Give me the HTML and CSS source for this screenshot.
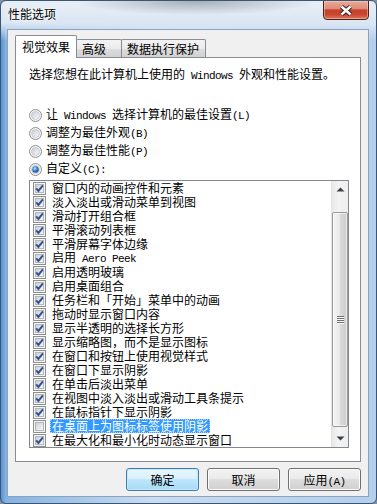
FILE: index.html
```html
<!DOCTYPE html>
<html lang="zh-CN">
  <head>
    <meta charset="UTF-8" />
    <meta name="viewport" content="width=device-width, initial-scale=1.0" />
    <title>性能选项</title>
    <link rel="stylesheet" href="styles.css">
  </head>
  <body>
    <svg class="defs" width="0" height="0">
      <defs>
        <linearGradient id="boxFill" x1="0" y1="0" x2="1" y2="1">
          <stop offset="0" stop-color="#c9cdd3" />
          <stop offset="1" stop-color="#f8f9fa" />
        </linearGradient>
        <radialGradient id="dotFill" cx="0.4" cy="0.35" r="0.75">
          <stop offset="0" stop-color="#c4e6fe" />
          <stop offset="0.45" stop-color="#3c86d2" />
          <stop offset="1" stop-color="#163b78" />
        </radialGradient>
        <symbol id="chk-off" viewBox="0 0 13 13">
          <rect x="0.5" y="0.5" width="12" height="12" fill="#f4f4f4" stroke="#8e8f8f" />
          <rect x="2.5" y="2.5" width="8" height="8" fill="url(#boxFill)" stroke="#b3b7bc" />
        </symbol>
        <symbol id="chk-on" viewBox="0 0 13 13">
          <use href="#chk-off" />
          <path d="M3.2 6.3 L5.4 8.9 L9.9 3.3" fill="none" stroke="#34508c" stroke-width="1.9" />
        </symbol>
        <symbol id="rad-off" viewBox="0 0 13 13">
          <circle cx="6.5" cy="6.5" r="6" fill="#f4f4f4" stroke="#8f8f8f" />
          <circle cx="6.5" cy="6.5" r="4" fill="url(#boxFill)" stroke="#c2c5c9" stroke-width="0.8" />
        </symbol>
        <symbol id="rad-on" viewBox="0 0 13 13">
          <use href="#rad-off" />
          <circle cx="6.5" cy="6.5" r="3.2" fill="url(#dotFill)" />
        </symbol>
      </defs>
    </svg>

    <div class="window">
      <div class="titlebar">
        <span class="title">性能选项</span>
        <div class="close">
          <svg width="14" height="11" viewBox="0 0 14 11">
            <path d="M2.5 1.5 L11.5 9.5 M11.5 1.5 L2.5 9.5" stroke="#3b1912" stroke-width="4.4" />
            <path d="M2.5 1.5 L11.5 9.5 M11.5 1.5 L2.5 9.5" stroke="#fff" stroke-width="2.4" />
          </svg>
        </div>
      </div>

      <div class="client">
        <div class="tabs">
          <div class="tab active">视觉效果</div>
          <div class="tab tab-adv">高级</div>
          <div class="tab tab-dep">数据执行保护</div>
        </div>

        <div class="panel">
          <p class="intro">选择您想在此计算机上使用的<span class="en"> Windows </span>外观和性能设置。</p>

          <div class="radios">
            <div class="radio"><svg class="rb"><use href="#rad-off" /></svg><span>让<span class="en"> Windows </span>选择计算机的最佳设置<span class="en">(L)</span></span></div>
            <div class="radio"><svg class="rb"><use href="#rad-off" /></svg><span>调整为最佳外观<span class="en">(B)</span></span></div>
            <div class="radio"><svg class="rb"><use href="#rad-off" /></svg><span>调整为最佳性能<span class="en">(P)</span></span></div>
            <div class="radio"><svg class="rb"><use href="#rad-on" /></svg><span>自定义<span class="en">(C):</span></span></div>
          </div>

          <div class="listbox">
            <ul class="items">
              <li><svg class="cb"><use href="#chk-on" /></svg><span>窗口内的动画控件和元素</span></li>
              <li><svg class="cb"><use href="#chk-on" /></svg><span>淡入淡出或滑动菜单到视图</span></li>
              <li><svg class="cb"><use href="#chk-on" /></svg><span>滑动打开组合框</span></li>
              <li><svg class="cb"><use href="#chk-on" /></svg><span>平滑滚动列表框</span></li>
              <li><svg class="cb"><use href="#chk-on" /></svg><span>平滑屏幕字体边缘</span></li>
              <li><svg class="cb"><use href="#chk-on" /></svg><span>启用<span class="en"> Aero Peek</span></span></li>
              <li><svg class="cb"><use href="#chk-on" /></svg><span>启用透明玻璃</span></li>
              <li><svg class="cb"><use href="#chk-on" /></svg><span>启用桌面组合</span></li>
              <li><svg class="cb"><use href="#chk-on" /></svg><span>任务栏和「开始」菜单中的动画</span></li>
              <li><svg class="cb"><use href="#chk-on" /></svg><span>拖动时显示窗口内容</span></li>
              <li><svg class="cb"><use href="#chk-on" /></svg><span>显示半透明的选择长方形</span></li>
              <li><svg class="cb"><use href="#chk-on" /></svg><span>显示缩略图，而不是显示图标</span></li>
              <li><svg class="cb"><use href="#chk-on" /></svg><span>在窗口和按钮上使用视觉样式</span></li>
              <li><svg class="cb"><use href="#chk-on" /></svg><span>在窗口下显示阴影</span></li>
              <li><svg class="cb"><use href="#chk-on" /></svg><span>在单击后淡出菜单</span></li>
              <li><svg class="cb"><use href="#chk-on" /></svg><span>在视图中淡入淡出或滑动工具条提示</span></li>
              <li><svg class="cb"><use href="#chk-on" /></svg><span>在鼠标指针下显示阴影</span></li>
              <li><svg class="cb"><use href="#chk-off" /></svg><span class="sel">在桌面上为图标标签使用阴影</span></li>
              <li><svg class="cb"><use href="#chk-on" /></svg><span>在最大化和最小化时动态显示窗口</span></li>
            </ul>
            <div class="scrollbar">
              <div class="sb-btn">
                <svg width="9" height="5" viewBox="0 0 9 5"><polygon points="0.5,4.5 4.5,0.5 8.5,4.5" fill="#404040" /></svg>
              </div>
              <div class="sb-gap"></div>
              <div class="thumb">
                <svg width="7" height="8" viewBox="0 0 7 8">
                  <rect x="0" y="0" width="7" height="1" fill="#707070" />
                  <rect x="0" y="2" width="7" height="1" fill="#707070" />
                  <rect x="0" y="4" width="7" height="1" fill="#707070" />
                  <rect x="0" y="6" width="7" height="1" fill="#707070" />
                  <rect x="0" y="1" width="7" height="1" fill="#fafafa" />
                  <rect x="0" y="3" width="7" height="1" fill="#fafafa" />
                  <rect x="0" y="5" width="7" height="1" fill="#fafafa" />
                  <rect x="0" y="7" width="7" height="1" fill="#fafafa" />
                </svg>
              </div>
              <div class="sb-rest"></div>
              <div class="sb-btn">
                <svg width="9" height="5" viewBox="0 0 9 5"><polygon points="0.5,0.5 8.5,0.5 4.5,4.5" fill="#404040" /></svg>
              </div>
            </div>
          </div>
        </div>

        <div class="buttons">
          <button class="btn default">确定</button>
          <button class="btn">取消</button>
          <button class="btn">应用<span class="en">(A)</span></button>
        </div>
      </div>
    </div>
  </body>
</html>
```

FILE: styles.css
```css
* {
  margin: 0;
  padding: 0;
  box-sizing: border-box;
}

body {
  background: #7f90a4;
  font-family: "Noto Sans CJK SC", sans-serif;
  font-size: 12px;
  line-height: 14px;
  color: #000;
}

.defs {
  display: block;
  width: 0;
  height: 0;
  overflow: hidden;
}

/* SimSun-like half width latin */
.en {
  font-family: "Liberation Mono", monospace;
  font-size: 11px;
  letter-spacing: -0.6px;
}

.window {
  width: 377px;
  height: 504px;
  border: 1px solid #3b5574;
  border-radius: 6px;
  padding: 0 7px 6px 6px;
  display: flex;
  flex-direction: column;
  overflow: hidden;
  background:
    radial-gradient(ellipse 120px 14px at 195px 0, rgba(85, 95, 110, 0.45), rgba(85, 95, 110, 0)),
    linear-gradient(to bottom, #e8eef6 0, #dbe6f3 22px, rgba(210, 225, 242, 0) 40px),
    linear-gradient(to right, #5a94d0 0, #86b3e2 5px, #c9dcf0 40%, #b4cfec 100%);
}

.titlebar {
  height: 28px;
  display: flex;
  justify-content: space-between;
  align-items: flex-start;
}

.title {
  margin: 6px 0 0 1px;
  text-shadow: 0 0 6px #fff, 0 0 3px #fff;
}

.close {
  width: 46px;
  height: 20px;
  margin-top: -1px;
  border: 1px solid #4e2219;
  border-radius: 0 0 4px 4px;
  background: linear-gradient(#eaaa9b, #dc8d78 42%, #c5412b 50%, #c84731 75%, #de7a60);
  box-shadow: inset 0 0 0 1px rgba(255, 215, 205, 0.45);
  display: flex;
  align-items: center;
  justify-content: center;
}

.client {
  flex: 1;
  background: #f0f0f0;
  border: 1px solid #8aa3c0;
  padding: 5px 7px 0 7px;
  display: flex;
  flex-direction: column;
}

.tabs {
  display: flex;
  align-items: flex-end;
  height: 23px;
}

.tab {
  height: 19px;
  border: 1px solid #898c95;
  border-bottom: none;
  border-radius: 2px 2px 0 0;
  margin-left: -1px;
  padding-left: 5px;
  line-height: 17px;
  background: linear-gradient(#f3f3f3, #ebebeb 50%, #dddddd 50%, #cfcfcf);
}

.tab.active {
  width: 62px;
  height: 23px;
  margin-left: 0;
  padding-left: 6px;
  line-height: 21px;
  background: #fff;
  position: relative;
  z-index: 1;
}

.tab-adv {
  width: 46px;
}

.tab-dep {
  width: 85px;
}

.panel {
  height: 405px;
  margin-top: -1px;
  border: 1px solid #898c95;
  background: #fff;
  padding: 9px 0 0 13px;
}

.radios {
  margin-top: 23px;
}

.radio {
  height: 18px;
  display: flex;
  align-items: center;
  gap: 4px;
}

.rb,
.cb {
  width: 13px;
  height: 13px;
  flex: none;
}

.listbox {
  margin-top: 2px;
  width: 320px;
  height: 268px;
  border: 1px solid #828790;
  background: #fff;
  display: flex;
}

.items {
  flex: 1;
  list-style: none;
  padding-left: 3px;
}

.items li {
  height: 14px;
  display: flex;
  align-items: center;
  gap: 6px;
  white-space: nowrap;
}

.sel {
  margin-left: -2px;
  padding: 0 2px;
  background: #3399ff;
  color: #fff;
  outline: 1px dotted #a6d0f8;
  outline-offset: -1px;
}

.scrollbar {
  width: 17px;
  display: flex;
  flex-direction: column;
  border-left: 1px solid #e2e2e2;
  background: linear-gradient(to right, #e9e9e9, #f3f3f3 40%, #eeeeee);
}

.sb-btn {
  height: 17px;
  display: flex;
  align-items: center;
  justify-content: center;
}

.sb-gap {
  height: 14px;
}

.thumb {
  height: 215px;
  border: 1px solid #999;
  border-radius: 2px;
  background: linear-gradient(to right, #f5f5f5, #e9e9e9 45%, #d8d8d8 55%, #cccccc);
  box-shadow: inset 0 0 0 1px rgba(255, 255, 255, 0.6);
  display: flex;
  align-items: center;
  justify-content: center;
}

.sb-rest {
  flex: 1;
}

.buttons {
  display: flex;
  justify-content: flex-end;
  gap: 8px;
  margin-top: 6px;
}

.btn {
  width: 73px;
  height: 23px;
  border: 1px solid #707070;
  border-radius: 3px;
  font: inherit;
  line-height: 21px;
  color: #000;
  text-align: center;
  background: linear-gradient(#f2f2f2, #ebebeb 45%, #dddddd 50%, #cfcfcf);
  box-shadow: inset 0 0 0 1px #fcfcfc;
}

.btn.default {
  border-color: #3c7fb1;
  background: linear-gradient(#eaf6fd, #d9f0fc 45%, #bee6fd 50%, #a7d9f5);
  box-shadow: inset 0 0 0 1px #c6e7f9;
}
```
